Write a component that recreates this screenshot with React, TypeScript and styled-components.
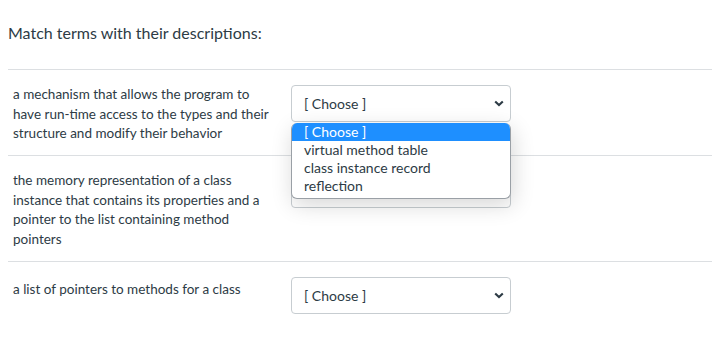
import styled, { createGlobalStyle } from 'styled-components'

const GlobalStyle = createGlobalStyle`
  body {
    margin: 8px;
    background: #fff;
    font-family: Lato, 'Noto Sans', sans-serif;
    color: #2d3b45;
  }
`

const Question = styled.div`
  width: 704px;
`

const Title = styled.div`
  font-size: 16px;
  line-height: 24px;
  padding: 13px 0 24px;
`

const Row = styled.div`
  display: flex;
  align-items: flex-start;
  border-top: 1px solid #dcdfe2;
  padding: 15px 0 11.75px;
`

const Term = styled.div<{ $offset?: number }>`
  box-sizing: border-box;
  width: 283px;
  padding: ${(p) => p.$offset ?? 0}px 16px 0 5px;
  font-size: 13.5px;
  line-height: 19.5px;
`

const SelectWrap = styled.div`
  position: relative;
`

const SelectBox = styled.div`
  box-sizing: border-box;
  width: 220px;
  height: 37px;
  display: flex;
  align-items: center;
  justify-content: space-between;
  padding: 0 6px 0 12px;
  border: 1px solid #c7cdd1;
  border-radius: 4px;
  background: #fff;
  font-size: 14px;
`

const Chevron = () => (
  <svg width="10" height="7" viewBox="0 0 10 7">
    <path d="M1.2 1.4 L5 5 L8.8 1.4" fill="none" stroke="#2d3b45" strokeWidth="2.1" />
  </svg>
)

const Menu = styled.ul`
  position: absolute;
  top: 38px;
  left: 0;
  z-index: 2;
  box-sizing: border-box;
  width: 220px;
  margin: 0;
  padding: 0 0 3px;
  list-style: none;
  background: #fff;
  border: 1px solid #9aa0a6;
  border-top: none;
  border-radius: 6px;
  overflow: hidden;
  box-shadow: 2px 6px 22px rgba(0, 0, 0, 0.16);
`

const Option = styled.li<{ $active?: boolean }>`
  height: 18px;
  line-height: 17px;
  padding-left: 12px;
  font-size: 14px;
  color: ${(p) => (p.$active ? '#fff' : '#2d3b45')};
  background: ${(p) => (p.$active ? '#1e8fff' : 'transparent')};
`

const options = ['[ Choose ]', 'virtual method table', 'class instance record', 'reflection']

function Select({ open }: { open?: boolean }) {
  return (
    <SelectWrap>
      <SelectBox>
        <span>[ Choose ]</span>
        <Chevron />
      </SelectBox>
      {open && (
        <Menu>
          {options.map((o, i) => (
            <Option key={o} $active={i === 0}>
              {o}
            </Option>
          ))}
        </Menu>
      )}
    </SelectWrap>
  )
}

export default function App() {
  return (
    <>
      <GlobalStyle />
      <Question>
        <Title>Match terms with their descriptions:</Title>
        <Row>
          <Term>
            a mechanism that allows the program to have run-time access to the types and their
            structure and modify their behavior
          </Term>
          <Select open />
        </Row>
        <Row>
          <Term>
            the memory representation of a class instance that contains its properties and a
            pointer to the list containing method pointers
          </Term>
          <Select />
        </Row>
        <Row>
          <Term $offset={3}>a list of pointers to methods for a class</Term>
          <Select />
        </Row>
      </Question>
    </>
  )
}
